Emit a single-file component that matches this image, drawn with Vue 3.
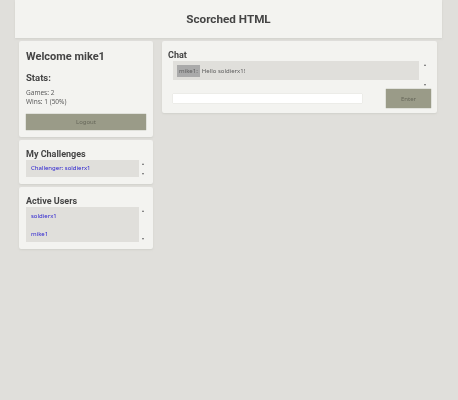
<template>
  <div class="page">
    <header class="header">
      <h1>Scorched HTML</h1>
    </header>

    <div class="main">
      <div class="side">
        <section class="panel welcome">
          <h2>Welcome mike1</h2>
          <h3>Stats:</h3>
          <p>Games: 2</p>
          <p>Wins: 1 (50%)</p>
          <button class="btn logout">Logout</button>
        </section>

        <section class="panel small">
          <h4>My Challenges</h4>
          <div class="scroller">
            <div class="list challenges">
              <a v-for="c in challenges" :key="c">Challenger: {{ c }}</a>
            </div>
            <div class="arrows"><i class="up"></i><i class="down"></i></div>
          </div>
        </section>

        <section class="panel small">
          <h4>Active Users</h4>
          <div class="scroller">
            <div class="list users">
              <a v-for="u in users" :key="u">{{ u }}</a>
            </div>
            <div class="arrows"><i class="up"></i><i class="down"></i></div>
          </div>
        </section>
      </div>

      <section class="panel chat">
        <h4>Chat</h4>
        <div class="scroller chat-scroller">
          <div class="messages">
            <span class="who">mike1:</span>
            <span>Hello soldierx1!</span>
          </div>
          <div class="arrows"><i class="up"></i><i class="down"></i></div>
        </div>
        <div class="entry">
          <input type="text" />
          <button class="btn enter">Enter</button>
        </div>
      </section>
    </div>
  </div>
</template>

<script setup>
const challenges = ['soldierx1']
const users = ['soldierx1', 'mike1']
</script>

<style>
html,
body {
  background: #e0dfdb;
}
</style>

<style scoped>
.page {
  height: 400px;
  overflow: hidden;
  font-family: "Noto Sans", sans-serif;
  color: #555;
  filter: blur(0.45px);
}

.header {
  height: 38px;
  margin: 0 16px 0 15px;
  background: #f3f3f0;
  box-shadow: 0 1px 2px #d0d0cb;
  display: flex;
  align-items: center;
  justify-content: center;
}

h1,
h2,
h3,
h4 {
  font-family: Roboto, sans-serif;
  font-weight: 700;
  color: #444;
}

h1 {
  margin: 0;
  font-size: 11.7px;
}

.main {
  display: flex;
  align-items: flex-start;
  gap: 9px;
  margin-top: 3px;
  padding-left: 19px;
}

.side {
  width: 134px;
  display: flex;
  flex-direction: column;
  gap: 3px;
}

.panel {
  background: #f3f3f0;
  border-radius: 2px;
  box-shadow: 0 1px 2px #d0d0cb;
  box-sizing: border-box;
}

h2 {
  margin: 0;
  font-size: 11px;
  line-height: 16px;
}

h3 {
  margin: 7px 0 4px;
  font-size: 9.5px;
  line-height: 12px;
}

h4 {
  margin: 0;
  font-size: 9px;
  line-height: 12px;
}

p {
  margin: 0;
  font-size: 6.5px;
  line-height: 9px;
  color: #5c5c5c;
}

.welcome {
  height: 96px;
  padding: 8px 7px 0;
}

.btn {
  display: block;
  border: 0;
  padding: 0;
  background: #9a9b88;
  color: #66675a;
  font: 6px "Noto Sans", sans-serif;
  box-shadow: 0 0 1px #85867a;
}

.logout {
  width: 120px;
  height: 16px;
  margin-top: 8px;
}

.small {
  padding: 8px 7px 7px;
}

.scroller {
  display: flex;
}

.list {
  flex: 1;
  background: #e0dfdb;
  padding: 0 5px;
  font-size: 6px;
  color: #2a20d0;
}

.list a {
  display: block;
}

.challenges {
  padding-top: 4px;
  height: 17px;
  box-sizing: border-box;
  line-height: 9px;
}

.users {
  padding-top: 5px;
  height: 35px;
  box-sizing: border-box;
  line-height: 9px;
}

.users a + a {
  margin-top: 9px;
}

.arrows {
  width: 7px;
  display: flex;
  flex-direction: column;
  justify-content: space-between;
  align-items: center;
  padding: 3px 0 2px;
  box-sizing: border-box;
}

.arrows i {
  width: 0;
  height: 0;
  border-left: 1.5px solid transparent;
  border-right: 1.5px solid transparent;
}

.up {
  border-bottom: 2px solid #666;
}

.down {
  border-top: 2px solid #666;
}

.chat {
  width: 275px;
  height: 72px;
  padding: 8px 6px 0 6px;
}

.chat-scroller {
  height: 27px;
  margin-bottom: 1px;
  margin-left: 5px;
}

.messages {
  width: 246px;
  height: 19px;
  box-sizing: border-box;
  padding: 4px;
  background: #e0dfdb;
  display: flex;
  align-items: center;
  gap: 2px;
  font-size: 6px;
  color: #5c5c5c;
}

.who {
  background: #aaa;
  padding: 0 2px;
  line-height: 12px;
  height: 12px;
  color: #5c5c5c;
}

.chat-scroller .arrows {
  flex: 1;
}

.entry {
  display: flex;
  align-items: center;
  justify-content: space-between;
  padding-left: 5px;
}

input {
  width: 189px;
  height: 9px;
  box-sizing: border-box;
  border: 0;
  background: #fff;
  box-shadow: 0 0 1px #c8c8c3;
  padding: 0;
}

.enter {
  width: 45px;
  height: 19px;
}
</style>
